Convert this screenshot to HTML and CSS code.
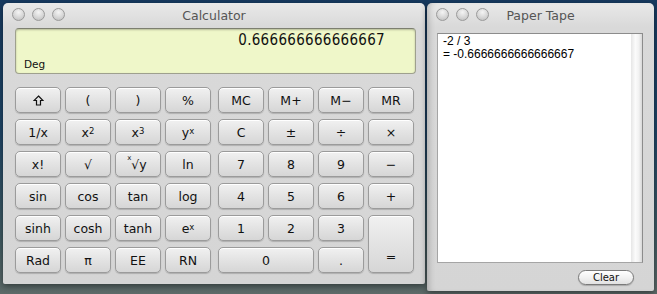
FILE: index.html
```html
<!DOCTYPE html>
<html lang="en">

<head>
  <meta charset="UTF-8">
  <meta name="viewport" content="width=device-width, initial-scale=1.0">
  <title>Calculator</title>
  <link rel="stylesheet" href="styles.css">
</head>

<body>
  <div class="desktop">
    <div class="window calc">
      <div class="titlebar">
        <div class="lights"><span></span><span></span><span></span></div>
        <div class="title">Calculator</div>
      </div>

      <div class="display">
        <div class="value">0.666666666666667</div>
        <div class="mode">Deg</div>
      </div>

      <div class="keypad">
        <div class="keys sci">
          <button aria-label="shift">
            <svg width="11" height="11" viewBox="0 0 11 11">
              <path d="M5.5 1 L10 5.5 L7.5 5.5 L7.5 10 L3.5 10 L3.5 5.5 L1 5.5 Z" fill="none" stroke="#111" stroke-width="1.2" stroke-linejoin="miter" />
            </svg>
          </button>
          <button>(</button>
          <button>)</button>
          <button>%</button>
          <button>1/x</button>
          <button>x<sup>2</sup></button>
          <button>x<sup>3</sup></button>
          <button>y<sup>x</sup></button>
          <button>x!</button>
          <button>&radic;</button>
          <button><span class="root"><sup>x</sup>&radic;</span>y</button>
          <button>ln</button>
          <button>sin</button>
          <button>cos</button>
          <button>tan</button>
          <button>log</button>
          <button>sinh</button>
          <button>cosh</button>
          <button>tanh</button>
          <button>e<sup>x</sup></button>
          <button>Rad</button>
          <button>&pi;</button>
          <button>EE</button>
          <button>RN</button>
        </div>
        <div class="keys basic">
          <button>MC</button>
          <button>M+</button>
          <button>M&minus;</button>
          <button>MR</button>
          <button>C</button>
          <button>&plusmn;</button>
          <button>&divide;</button>
          <button>&times;</button>
          <button>7</button>
          <button>8</button>
          <button>9</button>
          <button>&minus;</button>
          <button>4</button>
          <button>5</button>
          <button>6</button>
          <button>+</button>
          <button>1</button>
          <button>2</button>
          <button>3</button>
          <button class="equals">=</button>
          <button class="zero">0</button>
          <button>.</button>
        </div>
      </div>
    </div>

    <div class="window tape">
      <div class="titlebar">
        <div class="lights"><span></span><span></span><span></span></div>
        <div class="title">Paper Tape</div>
      </div>
      <div class="tape-body">
        <div class="tape-text">
          <p>-2 / 3</p>
          <p>= -0.6666666666666667</p>
        </div>
        <div class="scroll-track"></div>
      </div>
      <div class="tape-footer">
        <button class="clear-btn">Clear</button>
      </div>
    </div>
  </div>
</body>

</html>
```

FILE: styles.css
```css
body {
  margin: 0;
  padding: 0;
  width: 657px;
  height: 294px;
  overflow: hidden;
  font-family: "DejaVu Sans", sans-serif;
  background: linear-gradient(180deg, #173a60 0%, #1f4566 45%, #3f5a62 80%, #5d6a68 100%);
}

.desktop {
  display: flex;
  align-items: flex-start;
  padding: 3px 0 0 3px;
}

.window {
  background: linear-gradient(180deg, #e9e9e9 0px, #d9d9d9 24px, #d5d5d5 100%);
  border-radius: 5px 5px 2px 2px;
  box-shadow: 0 2px 6px rgba(0, 0, 0, 0.45);
}

.titlebar {
  position: relative;
  height: 24px;
  display: flex;
  align-items: center;
  justify-content: center;
}

.lights {
  position: absolute;
  left: 9px;
  top: 5px;
  display: flex;
  gap: 7px;
}

.lights span {
  width: 13px;
  height: 13px;
  border-radius: 50%;
  box-sizing: border-box;
  border: 1px solid #9a9a9a;
  background: radial-gradient(circle at 50% 30%, #f4f4f4 0%, #d6d6d6 55%, #b9b9b9 100%);
}

.title {
  font-size: 12.5px;
  color: #555;
  padding-top: 1px;
}

/* Calculator */
.calc {
  width: 422px;
  height: 281px;
}

.display {
  margin: 1px 9px 0 12px;
  height: 46px;
  box-sizing: border-box;
  background: #eff7c9;
  border: 1px solid #9ea08e;
  border-top-color: #7d7f70;
  border-radius: 4px;
  box-shadow: inset 0 1px 2px rgba(0, 0, 0, 0.25);
  padding: 2px 30px 0 8px;
  display: flex;
  flex-direction: column;
}

.value {
  text-align: right;
  font-family: "DejaVu Sans Condensed", "DejaVu Sans", sans-serif;
  font-size: 15px;
  letter-spacing: 0.3px;
  color: #111;
}

.mode {
  margin-top: auto;
  margin-bottom: 3px;
  font-size: 10.5px;
  color: #111;
}

.keypad {
  display: flex;
  gap: 7px;
  margin: 13px 0 0 12px;
}

.keys {
  display: grid;
  grid-template-columns: repeat(4, 46px);
  grid-auto-rows: 26px;
  gap: 6px 4px;
}

.keys button {
  font-family: "DejaVu Sans", sans-serif;
  font-size: 12.5px;
  color: #111;
  padding: 0;
  border: 1px solid #9b9b9b;
  border-radius: 5px;
  background: linear-gradient(180deg, #f1f1f1 0%, #e3e3e3 50%, #d6d6d6 100%);
  box-shadow: 0 1px 1px rgba(0, 0, 0, 0.18), inset 0 1px 0 #fff;
  display: flex;
  align-items: center;
  justify-content: center;
}

.keys sup {
  font-size: 8.5px;
  line-height: 0;
  position: relative;
  top: -1px;
}

.root {
  position: relative;
  padding-left: 2px;
}

.root sup {
  position: absolute;
  left: -2px;
  top: 1px;
  font-size: 7px;
}

.equals {
  grid-row: span 2;
  align-items: flex-end !important;
  padding-bottom: 8px !important;
}

.zero {
  grid-column: span 2;
}

/* Paper tape */
.tape {
  width: 227px;
  height: 288px;
  margin-left: 2px;
  box-shadow: 0 2px 6px rgba(0, 0, 0, 0.45), inset 6px 0 6px -4px rgba(0, 0, 0, 0.2);
}

.tape-body {
  margin: 6px 11px 0 10px;
  height: 228px;
  display: flex;
  background: #fff;
  border: 1px solid #8c8c8c;
  border-left-color: #a5a5a5;
  border-bottom-color: #a5a5a5;
}

.tape-text {
  flex: 1;
  padding: 1px 5px;
  font-family: "Liberation Sans", Arial, sans-serif;
  font-size: 12px;
  color: #000;
}

.tape-text p {
  margin: 0;
  line-height: 13px;
}

.scroll-track {
  width: 11px;
  background: linear-gradient(90deg, #e6e6e6 0%, #fbfbfb 40%, #f2f2f2 70%, #d8d8d8 100%);
}

.tape-footer {
  display: flex;
  justify-content: flex-end;
  padding: 7px 20px 0 0;
}

.clear-btn {
  width: 56px;
  height: 15px;
  padding: 0;
  font-family: "DejaVu Sans", sans-serif;
  font-size: 10px;
  color: #111;
  border: 1px solid #7a7a7a;
  border-radius: 8px;
  background: linear-gradient(180deg, #ffffff 0%, #f2f2f2 50%, #e2e2e2 100%);
  box-shadow: 0 1px 1px rgba(0, 0, 0, 0.2);
}
```
